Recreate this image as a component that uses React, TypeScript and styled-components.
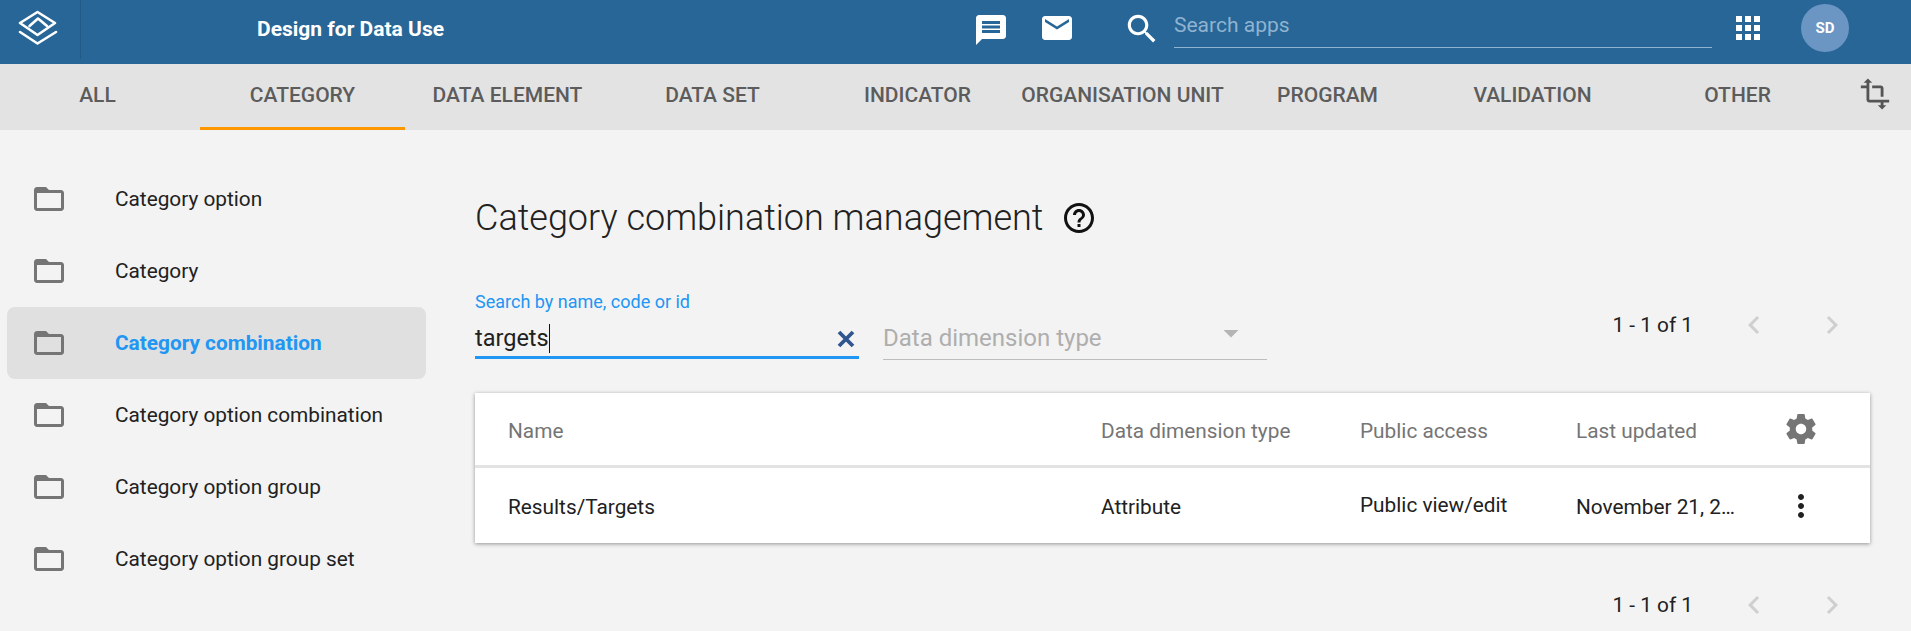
import React from 'react';
import styled, { createGlobalStyle } from 'styled-components';

const GlobalStyle = createGlobalStyle`
  html, body {
    margin: 0;
    height: 100%;
    overflow: hidden;
    background: #f3f3f3;
    font-family: Roboto, "Liberation Sans", sans-serif;
  }
`;

const paths = {
  message: 'M20 2H4c-1.1 0-1.99.9-1.99 2L2 22l4-4h14c1.1 0 2-.9 2-2V4c0-1.1-.9-2-2-2zm-2 12H6v-2h12v2zm0-3H6V9h12v2zm0-3H6V6h12v2z',
  email: 'M20 4H4c-1.1 0-1.99.9-1.99 2L2 18c0 1.1.9 2 2 2h16c1.1 0 2-.9 2-2V6c0-1.1-.9-2-2-2zm0 4l-8 5-8-5V6l8 5 8-5v2z',
  search: 'M15.5 14h-.79l-.28-.27C15.41 12.59 16 11.11 16 9.5 16 5.91 13.09 3 9.5 3S3 5.91 3 9.5 5.91 16 9.5 16c1.61 0 3.09-.59 4.23-1.57l.27.28v.79l5 4.99L20.49 19l-4.99-5zm-6 0C7.01 14 5 11.99 5 9.5S7.01 5 9.5 5 14 7.01 14 9.5 11.99 14 9.5 14z',
  apps: 'M4 8h4V4H4v4zm6 12h4v-4h-4v4zm-6 0h4v-4H4v4zm0-6h4v-4H4v4zm6 0h4v-4h-4v4zm6-10v4h4V4h-4zm-6 4h4V4h-4v4zm6 6h4v-4h-4v4zm0 6h4v-4h-4v4z',
  transform: 'M22 18v-2H8V4h2L7 1 4 4h2v2H2v2h4v8c0 1.1.9 2 2 2h8v2h-2l3 3 3-3h-2v-2h4zM10 8h6v6h2V8c0-1.1-.9-2-2-2h-6v2z',
  folder: 'M20 6h-8l-2-2H4c-1.1 0-1.99.9-1.99 2L2 18c0 1.1.9 2 2 2h16c1.1 0 2-.9 2-2V8c0-1.1-.9-2-2-2zm0 12H4V8h16v10z',
  help: 'M11 18h2v-2h-2v2zm1-16C6.48 2 2 6.48 2 12s4.48 10 10 10 10-4.48 10-10S17.52 2 12 2zm0 18c-4.41 0-8-3.59-8-8s3.59-8 8-8 8 3.59 8 8-3.59 8-8 8zm0-14c-2.21 0-4 1.79-4 4h2c0-1.1.9-2 2-2s2 .9 2 2c0 2-3 1.75-3 5h2c0-2.25 3-2.5 3-5 0-2.21-1.79-4-4-4z',
  settings: 'M19.43 12.98c.04-.32.07-.64.07-.98s-.03-.66-.07-.98l2.11-1.65c.19-.15.24-.42.12-.64l-2-3.46c-.12-.22-.39-.3-.61-.22l-2.49 1c-.52-.4-1.08-.73-1.69-.98l-.38-2.65C14.46 2.18 14.25 2 14 2h-4c-.25 0-.46.18-.49.42l-.38 2.65c-.61.25-1.17.59-1.69.98l-2.49-1c-.23-.09-.49 0-.61.22l-2 3.46c-.13.22-.07.49.12.64l2.11 1.65c-.04.32-.07.65-.07.98s.03.66.07.98l-2.11 1.65c-.19.15-.24.42-.12.64l2 3.46c.12.22.39.3.61.22l2.49-1c.52.4 1.08.73 1.69.98l.38 2.65c.03.24.24.42.49.42h4c.25 0 .46-.18.49-.42l.38-2.65c.61-.25 1.17-.59 1.69-.98l2.49 1c.23.09.49 0 .61-.22l2-3.46c.12-.22.07-.49-.12-.64l-2.11-1.65zM12 15.5c-1.93 0-3.5-1.57-3.5-3.5s1.57-3.5 3.5-3.5 3.5 1.57 3.5 3.5-1.57 3.5-3.5 3.5z',
  more: 'M12 8c1.1 0 2-.9 2-2s-.9-2-2-2-2 .9-2 2 .9 2 2 2zm0 2c-1.1 0-2 .9-2 2s.9 2 2 2 2-.9 2-2-.9-2-2-2zm0 6c-1.1 0-2 .9-2 2s.9 2 2 2 2-.9 2-2-.9-2-2-2z',
  chevronLeft: 'M15.41 7.41L14 6l-6 6 6 6 1.41-1.41L10.83 12z',
  chevronRight: 'M10 6L8.59 7.41 13.17 12l-4.58 4.59L10 18l6-6z',
  arrow: 'M7 10l5 5 5-5z'
};

const Svg = styled.svg`
  display: block;
  flex: none;
`;

const Icon: React.FC<{ name: keyof typeof paths; size: number; color: string }> = ({ name, size, color }) => (
  <Svg width={size} height={size} viewBox='0 0 24 24' fill={color}>
    <path d={paths[name]} />
  </Svg>
);

const Page = styled.div`
  width: 1911px;
  height: 631px;
  overflow: hidden;
  display: flex;
  flex-direction: column;
`;

const HeaderBar = styled.header`
  height: 64px;
  flex: none;
  background: #276696;
  display: flex;
  align-items: flex-start;
  color: #fff;
`;
const LogoCell = styled.div`
  width: 81px;
  height: 59px;
  flex: none;
  border-right: 1px solid #215a85;
  display: flex;
  align-items: center;
  justify-content: center;
  padding: 0 5px 3px 0;
  box-sizing: border-box;
`;
const AppName = styled.div`
  width: 706px;
  margin-left: 176px;
  flex: none;
  line-height: 59px;
  font-size: 21px;
  font-weight: 700;
`;
const HeaderIcon = styled.div<{ $width: number; $top: number; $left?: number }>`
  width: ${(p) => p.$width}px;
  height: 64px;
  flex: none;
  display: flex;
  justify-content: ${(p) => (p.$left ? 'flex-start' : 'center')};
  padding-top: ${(p) => p.$top}px;
  padding-left: ${(p) => p.$left || 0}px;
  box-sizing: border-box;
`;
const AppSearch = styled.div`
  width: 538px;
  height: 48px;
  flex: none;
  box-sizing: border-box;
  border-bottom: 1px solid #8fb3d0;
  font-size: 21px;
  line-height: 50px;
  color: #8fb3d0;
`;
const Avatar = styled.div`
  width: 48px;
  height: 48px;
  margin: 4px 0 0 17px;
  flex: none;
  border-radius: 50%;
  background: #6b95c3;
  font-size: 15px;
  font-weight: 700;
  display: flex;
  align-items: center;
  justify-content: center;
`;

const TabBar = styled.nav`
  height: 66px;
  flex: none;
  background: #e3e3e3;
  display: flex;
  margin-bottom: 33px;
`;
const Tab = styled.div<{ $active?: boolean; $first?: boolean }>`
  width: ${(p) => (p.$first ? 200 : 205)}px;
  padding-right: ${(p) => (p.$first ? 5 : 0)}px;
  flex: none;
  box-sizing: border-box;
  font-size: 21px;
  font-weight: 500;
  color: #5c5c5c;
  text-align: center;
  line-height: 62px;
  white-space: nowrap;
  border-bottom: 3px solid ${(p) => (p.$active ? '#ff9800' : 'transparent')};
`;
const TabAction = styled.div`
  flex: 1;
  display: flex;
  justify-content: flex-end;
  padding: 13px 19px 0 0;
`;

const Body = styled.div`
  flex: 1;
  display: flex;
  min-height: 0;
`;

const Sidebar = styled.aside`
  width: 419px;
  margin-left: 7px;
  flex: none;
`;
const SideItem = styled.div<{ $active?: boolean }>`
  height: 72px;
  display: flex;
  align-items: center;
  padding-left: 24px;
  border-radius: 8px;
  font-size: 20.8px;
  background: ${(p) => (p.$active ? '#e0e0e0' : 'transparent')};
  color: ${(p) => (p.$active ? '#2196f3' : '#212121')};
  font-weight: ${(p) => (p.$active ? 700 : 400)};
`;
const SideLabel = styled.span`
  margin-left: 48px;
`;

const Content = styled.main`
  width: 1396px;
  margin-left: 49px;
  flex: none;
`;
const TitleRow = styled.div`
  height: 68px;
  margin-top: 21px;
  display: flex;
  align-items: center;
  gap: 18px;
`;
const Title = styled.h1`
  margin: 0;
  font-size: 36px;
  font-weight: 300;
  color: #212121;
`;

const FilterRow = styled.div`
  display: flex;
  margin-top: 35px;
  height: 72px;
  align-items: flex-end;
`;
const SearchField = styled.div`
  width: 384px;
  height: 67px;
  box-sizing: border-box;
  flex: none;
  border-bottom: 3px solid #2196f3;
`;
const FloatingLabel = styled.div`
  font-size: 18px;
  line-height: 20px;
  color: #2196f3;
`;
const SearchValue = styled.div`
  margin-top: 12px;
  display: flex;
  align-items: center;
  justify-content: space-between;
  font-size: 23.5px;
  line-height: 29px;
  color: #212121;
`;
const Typed = styled.span`
  display: block;
  border-right: 1px solid #111;
`;
const ClearIcon = styled.svg`
  display: block;
  margin-right: 1px;
`;
const SelectField = styled.div`
  width: 384px;
  height: 48px;
  margin: 0 0 -1px 24px;
  box-sizing: border-box;
  flex: none;
  border-bottom: 1px solid #bdbdbd;
  display: flex;
  justify-content: space-between;
  padding-right: 18px;
  font-size: 24px;
  line-height: 52px;
  color: #aeaeae;
`;
const SelectArrow = styled.div`
  margin-top: 3px;
`;
const PagerSlot = styled.div`
  flex: 1;
  align-self: center;
  padding-top: 4px;
`;
const Pager = styled.div<{ $top: number }>`
  display: flex;
  align-items: center;
  justify-content: flex-end;
  height: 36px;
  margin-top: ${(p) => p.$top}px;
  padding-right: 21px;
  font-size: 20.8px;
  color: #212121;
`;
const PagerButton = styled.div<{ $gap: number }>`
  margin-left: ${(p) => p.$gap}px;
`;

const Table = styled.div`
  margin: 34px 1px 0 0;
  background: #fff;
  box-shadow: 0 1px 4px rgba(0, 0, 0, 0.4);
`;
const Cell = styled.div<{ $raise?: boolean }>`
  white-space: nowrap;
  overflow: hidden;
  text-overflow: ellipsis;
  padding-bottom: ${(p) => (p.$raise ? 3 : 0)}px;
`;
const TableRow = styled.div<{ $head?: boolean }>`
  display: grid;
  grid-template-columns: 593px 259px 216px 160px 1fr;
  padding-left: 33px;
  height: ${(p) => (p.$head ? 72 : 75)}px;
  align-items: center;
  border-bottom: ${(p) => (p.$head ? '3px solid #e3e3e3' : 'none')};
  font-size: 20.8px;
  color: ${(p) => (p.$head ? '#757575' : '#212121')};
  ${Cell} {
    padding-top: ${(p) => (p.$head ? 4 : 2)}px;
  }
`;
const ActionCell = styled.div`
  margin-left: 47px;
`;

const tabs = ['All', 'Category', 'Data element', 'Data set', 'Indicator', 'Organisation unit', 'Program', 'Validation', 'Other'];
const sideItems = [
  'Category option',
  'Category',
  'Category combination',
  'Category option combination',
  'Category option group',
  'Category option group set'
];

const PagerControls: React.FC<{ top: number }> = ({ top }) => (
  <Pager $top={top}>
    1 - 1 of 1
    <PagerButton $gap={43}>
      <Icon name='chevronLeft' size={36} color='#cfcfcf' />
    </PagerButton>
    <PagerButton $gap={42}>
      <Icon name='chevronRight' size={36} color='#cfcfcf' />
    </PagerButton>
  </Pager>
);

const App: React.FC = () => (
  <Page>
    <GlobalStyle />
    <HeaderBar>
      <LogoCell>
        <svg width='40' height='36' viewBox='0 0 40 36' fill='none' stroke='#fff' strokeWidth='2.6' strokeLinejoin='round' strokeLinecap='round'>
          <path d='M19.5 2 37 13 19.5 25 2 13z' />
          <path d='M11.5 16 20 8.5 29 16' />
          <path d='M2 22 19.5 33.5 38 22' />
        </svg>
      </LogoCell>
      <AppName>Design for Data Use</AppName>
      <HeaderIcon $width={56} $top={12}>
        <Icon name='message' size={36} color='#fff' />
      </HeaderIcon>
      <HeaderIcon $width={76} $top={10}>
        <Icon name='email' size={36} color='#fff' />
      </HeaderIcon>
      <HeaderIcon $width={79} $top={10} $left={28}>
        <Icon name='search' size={38} color='#fff' />
      </HeaderIcon>
      <AppSearch>Search apps</AppSearch>
      <HeaderIcon $width={72} $top={10}>
        <Icon name='apps' size={36} color='#fff' />
      </HeaderIcon>
      <Avatar>SD</Avatar>
    </HeaderBar>
    <TabBar>
      {tabs.map((tab, i) => (
        <Tab key={tab} $first={i === 0} $active={tab === 'Category'}>
          {tab.toUpperCase()}
        </Tab>
      ))}
      <TabAction>
        <Icon name='transform' size={34} color='#555' />
      </TabAction>
    </TabBar>
    <Body>
      <Sidebar>
        {sideItems.map((item) => (
          <SideItem key={item} $active={item === 'Category combination'}>
            <Icon name='folder' size={36} color='#757575' />
            <SideLabel>{item}</SideLabel>
          </SideItem>
        ))}
      </Sidebar>
      <Content>
        <TitleRow>
          <Title>Category combination management</Title>
          <Icon name='help' size={36} color='#111' />
        </TitleRow>
        <FilterRow>
          <SearchField>
            <FloatingLabel>Search by name, code or id</FloatingLabel>
            <SearchValue>
              <Typed>targets</Typed>
              <ClearIcon width='24' height='24' viewBox='0 0 24 24' stroke='#30568f' strokeWidth='3.8' fill='none'>
                <path d='M5 5 19 19M19 5 5 19' />
              </ClearIcon>
            </SearchValue>
          </SearchField>
          <SelectField>
            Data dimension type
            <SelectArrow>
              <Icon name='arrow' size={36} color='#b4b4b4' />
            </SelectArrow>
          </SelectField>
          <PagerSlot>
            <PagerControls top={0} />
          </PagerSlot>
        </FilterRow>
        <Table>
          <TableRow $head>
            <Cell>Name</Cell>
            <Cell>Data dimension type</Cell>
            <Cell>Public access</Cell>
            <Cell>Last updated</Cell>
            <ActionCell>
              <Icon name='settings' size={36} color='#757575' />
            </ActionCell>
          </TableRow>
          <TableRow>
            <Cell>Results/Targets</Cell>
            <Cell>Attribute</Cell>
            <Cell $raise>Public view/edit</Cell>
            <Cell>November 21, 2019</Cell>
            <ActionCell>
              <Icon name='more' size={36} color='#212121' />
            </ActionCell>
          </TableRow>
        </Table>
        <PagerControls top={44} />
      </Content>
    </Body>
  </Page>
);

export default App;
